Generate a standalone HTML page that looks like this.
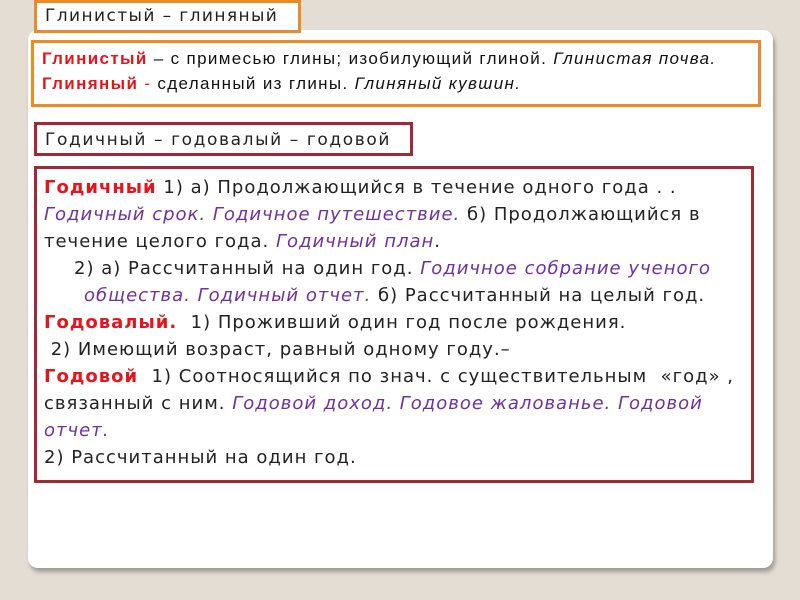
<!DOCTYPE html>
<html><head><meta charset="utf-8"><style>
body{margin:0;width:800px;height:600px;background:#e3ddd3;position:relative;overflow:hidden;font-family:"DejaVu Sans","Liberation Sans",sans-serif;}
.card{position:absolute;left:28px;top:30px;width:745px;height:538px;background:#fff;border-radius:10px;box-shadow:2px 4px 4px rgba(0,0,0,0.3);}
.b{position:absolute;background:#fff;box-sizing:border-box;white-space:nowrap;}
.t1{left:34px;top:0;width:267px;height:33px;border:3px solid #ec8a2a;font-size:17px;letter-spacing:1.4px;padding:3px 0 0 8px;color:#222;}
.b2{left:31px;top:40px;width:730px;height:67px;border:3px solid #ec8a2a;font-family:"Liberation Sans",sans-serif;font-size:17px;letter-spacing:1.35px;padding:3px 0 0 8px;line-height:25px;color:#111;}
.t3{left:34px;top:122px;width:379px;height:34px;border:3px solid #9e2a35;font-size:17px;letter-spacing:1.6px;padding:5px 0 0 8px;color:#222;}
.b4{left:34px;top:166px;width:720px;height:317px;border:3px solid #9e2a35;font-size:18px;letter-spacing:1px;padding:5px 0 0 7px;line-height:27px;color:#222;}
.r{color:#e8141c;font-weight:bold;}
.p{color:#7030a0;font-style:italic;}
i{font-style:italic;}
.i1{display:inline-block;margin-left:30px;}
.i2{display:inline-block;margin-left:40px;}
</style></head><body>
<div class="card"></div>
<div class="b t1">Глинистый – глиняный</div>
<div class="b b2"><span class="r">Глинистый</span> – с примесью глины; изобилующий глиной. <i>Глинистая почва.</i><br><span class="r">Глиняный</span> <span style="color:#e8141c">-</span> сделанный из глины. <i>Глиняный кувшин.</i></div>
<div class="b t3">Годичный – годовалый – годовой</div>
<div class="b b4"><span class="r">Годичный</span> 1) а) Продолжающийся в течение одного года . .<br><span class="p">Годичный срок. Годичное путешествие.</span> б) Продолжающийся в<br>течение целого года. <span class="p">Годичный план</span>.<br><span class="i1">2) а) Рассчитанный на один год. <span class="p">Годичное собрание ученого</span></span><br><span class="i2"><span class="p">общества. Годичный отчет.</span> б) Рассчитанный на целый год.</span><br><span class="r">Годовалый.</span>&nbsp; 1) Проживший один год после рождения.<br>&nbsp;2) Имеющий возраст, равный одному году.–<br><span class="r">Годовой</span>&nbsp; 1) Соотносящийся по знач. с существительным&nbsp; «год» ,<br>связанный с ним. <span class="p">Годовой доход. Годовое жалованье. Годовой<br>отчет.</span><br>2) Рассчитанный на один год.</div>
</body></html>
